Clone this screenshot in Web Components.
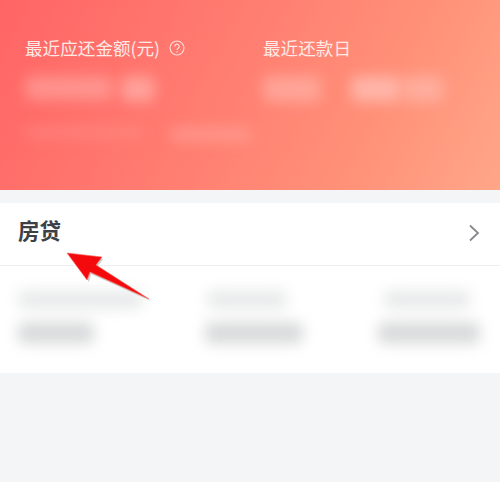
<!DOCTYPE html>
<html lang="zh">
<head>
<meta charset="utf-8">
<title>房贷</title>
<style>
html, body { margin: 0; height: 100%; background: #f3f5f7; }
body { font-family: "Noto Sans CJK SC", "Liberation Sans", sans-serif; overflow: hidden; position: relative; }
</style>
</head>
<body>
<loan-header>
    <loan-summary slot="left" label="最近应还金额(元)" help>
        <blur-bar w="88" h="24" tone="rgba(255,170,165,.6)"></blur-bar>
        <blur-bar w="34" h="26" tone="rgba(255,180,172,.7)" gap="8"></blur-bar>
    </loan-summary>
    <loan-summary slot="right" label="最近还款日">
        <blur-bar w="58" h="26" tone="rgba(255,185,175,.6)"></blur-bar>
        <blur-bar w="50" h="26" tone="rgba(255,190,180,.8)" gap="30"></blur-bar>
        <blur-bar w="40" h="26" tone="rgba(255,190,180,.6)" gap="2"></blur-bar>
    </loan-summary>
    <div slot="note" style="display:flex">
        <blur-bar w="118" h="11" tone="rgba(255,165,155,.3)"></blur-bar>
        <blur-bar w="82" h="15" tone="rgba(255,170,160,.5)" gap="27"></blur-bar>
    </div>
</loan-header>
<loan-card title="房贷">
    <loan-stat w1="125" w2="76"></loan-stat>
    <loan-stat w1="80" w2="98" gap1="2"></loan-stat>
    <loan-stat w1="86" w2="102" gap1="6"></loan-stat>
</loan-card>
<red-arrow></red-arrow>
<script>
class BlurBar extends HTMLElement {
    constructor() {
        super();
        this._root = this.attachShadow({mode:"open"});
    }
    connectedCallback() {
        var w = this.getAttribute("w"), h = this.getAttribute("h");
        var tone = this.getAttribute("tone") || "#ddd";
        var gap = this.getAttribute("gap") || 0;
        this._root.innerHTML = `
            <style>
                :host { display: block; flex: none; width: ${w}px; height: ${h}px; margin-left: ${gap}px; }
                div { width: 100%; height: 100%; background: ${tone}; filter: blur(7px); border-radius: 6px; }
            </style>
            <div></div>
        `;
    }
}
window.customElements.define("blur-bar", BlurBar);

class LoanHeader extends HTMLElement {
    constructor() {
        super();
        this._root = this.attachShadow({mode:"open"});
        this._root.innerHTML = `
            <style>
                :host {
                    display: block; box-sizing: border-box; height: 190px; padding: 36px 0 0 25px;
                    background: linear-gradient(118deg, #ff6565 0%, #ff7a70 38%, #ff9078 72%, #ffa688 100%);
                    color: #ffe9e5;
                }
                .cols { display: flex; }
                .left { width: 238px; }
                .note { margin-top: 25px; }
            </style>
            <div class="cols">
                <div class="left"><slot name="left"></slot></div>
                <div><slot name="right"></slot></div>
            </div>
            <div class="note"><slot name="note"></slot></div>
        `;
    }
}
window.customElements.define("loan-header", LoanHeader);

class LoanSummary extends HTMLElement {
    constructor() {
        super();
        this._root = this.attachShadow({mode:"open"});
    }
    connectedCallback() {
        var help = this.hasAttribute("help") ? `
            <svg width="16" height="16" viewBox="0 0 16 16" fill="none" stroke="#ffe2dc" stroke-width="1.1">
                <circle cx="8" cy="8" r="7"/>
                <path d="M5.8 6.4a2.2 2.2 0 1 1 3.4 1.8c-.8.5-1.2 1-1.2 1.9"/>
                <path d="M8 11.3v1.1"/>
            </svg>` : "";
        this._root.innerHTML = `
            <style>
                :host { display: block; }
                .label { display: flex; align-items: center; gap: 9px; height: 24px; font-size: 17.6px; line-height: 24px; white-space: nowrap; }
                .value { display: flex; margin-top: 16px; }
            </style>
            <div class="label"><span>${this.getAttribute("label")}</span>${help}</div>
            <div class="value"><slot></slot></div>
        `;
    }
}
window.customElements.define("loan-summary", LoanSummary);

class LoanCard extends HTMLElement {
    constructor() {
        super();
        this._root = this.attachShadow({mode:"open"});
    }
    connectedCallback() {
        this._root.innerHTML = `
            <style>
                :host { display: block; box-sizing: border-box; height: 170px; margin-top: 13px; background: #fff; overflow: hidden; }
                .head {
                    display: flex; align-items: center; justify-content: space-between; box-sizing: border-box;
                    height: 63px; padding: 0 20px 8px 18px; border-bottom: 1px solid #eceef0;
                }
                .title { font-size: 21.5px; line-height: 30px; font-weight: 700; color: #3d4145; }
                .head svg { margin-top: 6px; }
                .stats { display: grid; grid-template-columns: 187px 173px 1fr; padding: 24px 0 0 18px; }
            </style>
            <div class="head">
                <span class="title">${this.getAttribute("title")}</span>
                <svg width="12" height="18" viewBox="0 0 12 18" fill="none" stroke="#85888c" stroke-width="1.8"><path d="M2 1.5 10 9l-8 7.5"/></svg>
            </div>
            <div class="stats"><slot></slot></div>
        `;
    }
}
window.customElements.define("loan-card", LoanCard);

class LoanStat extends HTMLElement {
    constructor() {
        super();
        this._root = this.attachShadow({mode:"open"});
    }
    connectedCallback() {
        this._root.innerHTML = `
            <style>
                :host { display: flex; flex-direction: column; gap: 13px; }
            </style>
            <blur-bar w="${this.getAttribute("w1")}" h="19" gap="${this.getAttribute("gap1") || 0}" tone="#e9eaeb"></blur-bar>
            <blur-bar w="${this.getAttribute("w2")}" h="22" tone="#d9dadb"></blur-bar>
        `;
    }
}
window.customElements.define("loan-stat", LoanStat);

// annotation drawn over the card, its place on the screenshot is the content
class RedArrow extends HTMLElement {
    constructor() {
        super();
        this._root = this.attachShadow({mode:"open"});
        this._root.innerHTML = `
            <style>
                :host { position: absolute; left: 60px; top: 246px; width: 96px; height: 60px; }
                svg { display: block; overflow: visible; }
            </style>
            <svg width="96" height="60" viewBox="60 246 96 60">
                <path d="M68 254 102 258 97 265 150 300 90 273 88 281Z" fill="#a9a9a9" opacity=".6" transform="translate(1 1)"/>
                <path d="M67 253 102 257 96 265 149 299 90 272 87 280Z" fill="#f40a0c" stroke="#ff6a60" stroke-width=".6"/>
            </svg>
        `;
    }
}
window.customElements.define("red-arrow", RedArrow);
</script>
</body>
</html>
